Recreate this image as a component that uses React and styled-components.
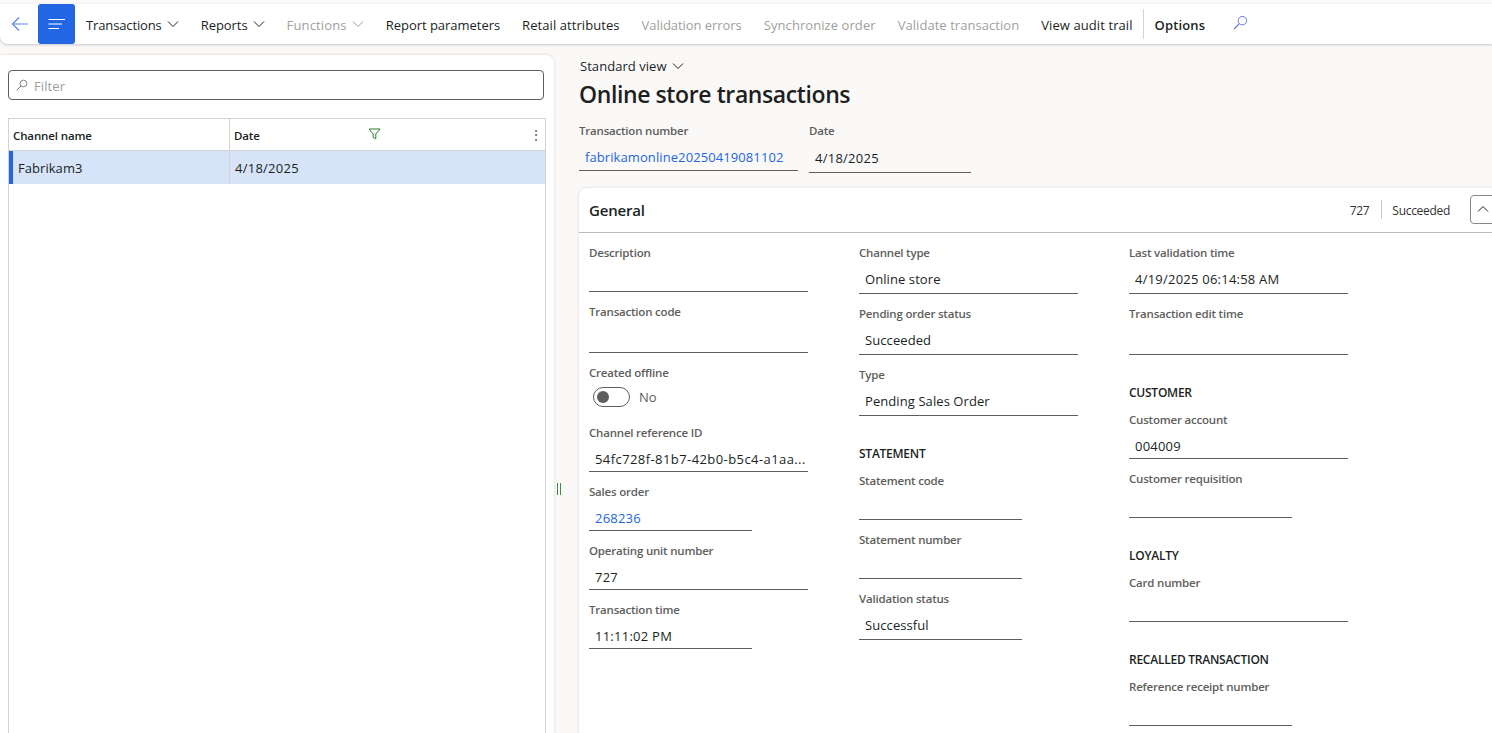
import React from 'react';
import styled, { createGlobalStyle } from 'styled-components';

const FONT = '"Open Sans", "Noto Sans", sans-serif';

const menuItems = [
    { label: 'Transactions', chevron: true, track: -0.13 },
    { label: 'Reports', chevron: true },
    { label: 'Functions', chevron: true, disabled: true, track: 0.15 },
    { label: 'Report parameters', track: -0.03 },
    { label: 'Retail attributes', track: 0.07 },
    { label: 'Validation errors', disabled: true },
    { label: 'Synchronize order', disabled: true, track: 0.07 },
    { label: 'Validate transaction', disabled: true, track: 0.05 },
    { label: 'View audit trail', track: 0.09 },
];

function Chevron({ up }) {
    return (
        <ChevronIcon viewBox="0 0 12 8" $up={up}>
            <path d="M1 1.5 L6 6.5 L11 1.5" fill="none" stroke="currentColor" strokeWidth="1" />
        </ChevronIcon>
    );
}

function SearchGlass({ color, size }) {
    return (
        <svg width={size} height={size} viewBox="0 0 16 16">
            <circle cx="10" cy="6" r="4.5" fill="none" stroke={color} strokeWidth="1" />
            <path d="M6.8 9.2 L1 15" stroke={color} strokeWidth="1.2" />
        </svg>
    );
}

function Field({ label, value, link, short, tall, track }) {
    return (
        <FieldBox $short={short}>
            <Label>{label}</Label>
            <Value $link={link} $tall={tall} $track={track}>{value}</Value>
        </FieldBox>
    );
}

function App() {
    return (
        <Page>
            <GlobalStyle />
            <Toolbar>
                <BackButton>
                    <svg width="18" height="16" viewBox="0 0 18 16">
                        <path d="M17 8 H1.5 M8 1.5 L1.5 8 L8 14.5" fill="none" stroke="#5b83e8" strokeWidth="1.2" />
                    </svg>
                </BackButton>
                <MenuButton>
                    <svg width="18" height="12" viewBox="0 0 18 12">
                        <path d="M0.5 1.5 H17 M0.5 6 H14 M0.5 10.5 H11" stroke="#fff" strokeWidth="1" />
                    </svg>
                </MenuButton>
                {menuItems.map(item => (
                    <MenuItem key={item.label} $disabled={item.disabled} $track={item.track}>
                        {item.label}
                        {item.chevron && <Chevron />}
                    </MenuItem>
                ))}
                <ToolbarDivider />
                <OptionsItem>Options</OptionsItem>
                <SearchButton>
                    <SearchGlass color="#5b6fe0" size={15} />
                </SearchButton>
            </Toolbar>

            <Content>
                <LeftPanel>
                    <FilterBox>
                        <SearchGlass color="#605e5c" size={12} />
                        <FilterText>Filter</FilterText>
                    </FilterBox>
                    <Grid>
                        <GridHeader>
                            <NameHead>Channel name</NameHead>
                            <DateHead>
                                Date
                                <svg width="13" height="12" viewBox="0 0 13 12">
                                    <path d="M1 1 H12 L7.8 6 V10.8 L5.2 9.5 V6 Z" fill="none" stroke="#2e7d32" strokeWidth="1" />
                                </svg>
                            </DateHead>
                            <MoreDots>⋮</MoreDots>
                        </GridHeader>
                        <GridRow>
                            <NameCell>Fabrikam3</NameCell>
                            <DateCell>4/18/2025</DateCell>
                        </GridRow>
                    </Grid>
                </LeftPanel>

                <Splitter>
                    <SplitterGrip />
                </Splitter>

                <Details>
                    <ViewPicker>Standard view <Chevron /></ViewPicker>
                    <Title>Online store transactions</Title>
                    <HeaderFields>
                        <HeaderField $width={219}>
                            <Label>Transaction number</Label>
                            <HeaderValue $link>fabrikamonline20250419081102</HeaderValue>
                        </HeaderField>
                        <HeaderField $width={162}>
                            <Label>Date</Label>
                            <HeaderValue $tall>4/18/2025</HeaderValue>
                        </HeaderField>
                    </HeaderFields>

                    <Card>
                        <CardHeader>
                            <CardTitle>General</CardTitle>
                            <CardSummary>727</CardSummary>
                            <SummaryDivider />
                            <CardSummary>Succeeded</CardSummary>
                            <CollapseButton><Chevron up /></CollapseButton>
                        </CardHeader>
                        <CardBody>
                            <Column>
                                <Field label="Description" value="" />
                                <Field label="Transaction code" value="" tall />
                                <ToggleField>
                                    <Label>Created offline</Label>
                                    <ToggleRow>
                                        <ToggleTrack><ToggleKnob /></ToggleTrack>
                                        <ToggleText>No</ToggleText>
                                    </ToggleRow>
                                </ToggleField>
                                <Field label="Channel reference ID" value="54fc728f-81b7-42b0-b5c4-a1aa..." track={0.42} />
                                <Field label="Sales order" value="268236" link short track={0.2} />
                                <Field label="Operating unit number" value="727" track={0.2} />
                                <Field label="Transaction time" value="11:11:02 PM" short track={0.25} />
                            </Column>
                            <Column>
                                <Field label="Channel type" value="Online store" tall />
                                <Field label="Pending order status" value="Succeeded" tall />
                                <Field label="Type" value="Pending Sales Order" tall />
                                <SectionTitle>STATEMENT</SectionTitle>
                                <Field label="Statement code" value="" short />
                                <Field label="Statement number" value="" short />
                                <Field label="Validation status" value="Successful" short tall />
                            </Column>
                            <Column>
                                <Field label="Last validation time" value="4/19/2025 06:14:58 AM" tall track={0.23} />
                                <Field label="Transaction edit time" value="" tall />
                                <SectionTitle>CUSTOMER</SectionTitle>
                                <Field label="Customer account" value="004009" track={0.2} />
                                <Field label="Customer requisition" value="" short />
                                <SectionTitle>LOYALTY</SectionTitle>
                                <Field label="Card number" value="" />
                                <SectionTitle>RECALLED TRANSACTION</SectionTitle>
                                <Field label="Reference receipt number" value="" short />
                            </Column>
                        </CardBody>
                    </Card>
                </Details>
            </Content>
        </Page>
    );
}

export default App;

const GlobalStyle = createGlobalStyle`
    html, body {
        margin: 0;
        height: 100%;
        overflow: hidden;
        background: #faf9f8;
    }
    body, button {
        font-family: ${FONT};
    }
`;

const Page = styled.div`
    width: 1492px;
    height: 733px;
    overflow: hidden;
    padding-top: 4px;
    box-sizing: border-box;
    background: #faf9f8;
    color: #201f1e;
    font-size: 13px;
`;

const Toolbar = styled.div`
    display: flex;
    align-items: center;
    height: 40px;
    background: #fff;
    border-radius: 0 0 0 8px;
    box-shadow: 0 1px 3px rgba(0, 0, 0, 0.2);
    position: relative;
`;

const BackButton = styled.div`
    width: 38px;
    display: flex;
    justify-content: center;
    align-items: center;
    padding-left: 1px;
    box-sizing: border-box;
`;

const MenuButton = styled.div`
    width: 37px;
    height: 40px;
    background: #2266e3;
    border-radius: 3px;
    display: flex;
    align-items: center;
    justify-content: center;
    margin-right: 11px;
`;

const MenuItem = styled.div`
    display: flex;
    align-items: center;
    gap: 5px;
    margin-right: 22px;
    padding-top: 1px;
    white-space: nowrap;
    letter-spacing: ${props => props.$track ?? -0.05}px;
    color: ${props => (props.$disabled ? '#a19f9d' : '#201f1e')};

    svg {
        margin-top: -2px;
    }
`;

const ChevronIcon = styled.svg`
    width: 12px;
    height: 8px;
    transform: ${props => (props.$up ? 'rotate(180deg)' : 'none')};
`;

const ToolbarDivider = styled.div`
    width: 1px;
    height: 30px;
    background: #d8d6d4;
    margin-left: -12px;
    margin-right: 11px;
`;

const OptionsItem = styled.div`
    font-weight: 600;
    letter-spacing: 0.15px;
    margin-right: 28px;
    padding-top: 1px;
`;

const SearchButton = styled.div`
    display: flex;
    margin-top: -3px;
`;

const Content = styled.div`
    display: flex;
    height: 689px;
    margin-top: 11px;
`;

const LeftPanel = styled.div`
    width: 554px;
    flex: none;
    background: #fff;
    border-radius: 0 8px 0 0;
    box-shadow: 0 0 3px rgba(0, 0, 0, 0.15);
    padding: 15px 8px 0;
    box-sizing: border-box;
`;

const FilterBox = styled.div`
    width: 536px;
    height: 30px;
    border: 1px solid #605e5c;
    border-radius: 4px;
    box-sizing: border-box;
    display: flex;
    align-items: center;
    gap: 6px;
    padding: 0 0 0 7px;
`;

const FilterText = styled.span`
    color: #a19f9d;
    letter-spacing: 0.1px;
    padding-top: 1px;
`;

const Grid = styled.div`
    width: 538px;
    height: 640px;
    margin-top: 18px;
    border: 1px solid #d4d2d0;
    border-bottom: 0;
    box-sizing: border-box;
`;

const GridHeader = styled.div`
    display: flex;
    align-items: center;
    height: 32px;
    box-sizing: border-box;
    border-bottom: 1px solid #d4d2d0;
    font-size: 11.5px;
    font-weight: 600;
    letter-spacing: -0.12px;
`;

const NameHead = styled.div`
    width: 221px;
    height: 100%;
    display: flex;
    align-items: center;
    padding: 2px 0 0 4px;
    box-sizing: border-box;
    border-right: 1px solid #d4d2d0;
`;

const DateHead = styled.div`
    flex: 1;
    height: 100%;
    display: flex;
    align-items: center;
    gap: 108px;
    padding: 2px 0 0 4px;
    box-sizing: border-box;

    svg {
        margin-top: -4px;
    }
`;

const MoreDots = styled.div`
    width: 19px;
    text-align: center;
    font-size: 14px;
    font-weight: 400;
    color: #605e5c;
`;

const GridRow = styled.div`
    display: flex;
    height: 33px;
    background: #d6e3f9;
`;

const NameCell = styled.div`
    width: 221px;
    flex: none;
    display: flex;
    align-items: center;
    padding-left: 5px;
    box-sizing: border-box;
    border-left: 4px solid #2266e3;
    border-right: 1px solid #d4d2d0;
    letter-spacing: 0.05px;
`;

const DateCell = styled.div`
    display: flex;
    align-items: center;
    padding-left: 5px;
    letter-spacing: 0.25px;
`;

const Splitter = styled.div`
    width: 25px;
    flex: none;
    padding: 428px 0 0 3px;
    box-sizing: border-box;
`;

const SplitterGrip = styled.div`
    width: 2px;
    height: 12px;
    border-left: 1px solid #3a8a4a;
    border-right: 1px solid #3a8a4a;
`;

const Details = styled.div`
    flex: 1;
    min-width: 0;
`;

const ViewPicker = styled.div`
    display: flex;
    align-items: center;
    gap: 5px;
    height: 22px;
    padding-left: 1px;
    letter-spacing: 0.05px;
`;

const Title = styled.h1`
    margin: 0;
    height: 36px;
    line-height: 35px;
    font-size: 23px;
    font-weight: 600;
    letter-spacing: -0.4px;
    color: #201f1e;
`;

const HeaderFields = styled.div`
    display: flex;
    align-items: flex-start;
    gap: 11px;
    margin-top: 10px;
`;

const HeaderField = styled.div`
    width: ${props => props.$width}px;
`;

const Label = styled.div`
    height: 16px;
    line-height: 16px;
    font-size: 11.5px;
    font-weight: 600;
    letter-spacing: -0.2px;
    color: #605e5c;
    white-space: nowrap;
`;

const HeaderValue = styled.div`
    height: ${props => (props.$tall ? 34 : 32)}px;
    box-sizing: border-box;
    padding: ${props => (props.$tall ? 10 : 9)}px 0 0 6px;
    line-height: 18px;
    border-bottom: 1px solid #605e5c;
    letter-spacing: ${props => (props.$link ? 0.09 : 0.25)}px;
    color: ${props => (props.$link ? '#2266e3' : '#201f1e')};
`;

const Card = styled.div`
    width: 930px;
    height: 560px;
    margin-top: 15px;
    background: #fff;
    border-radius: 8px 8px 0 0;
    box-shadow: 0 0 3px rgba(0, 0, 0, 0.14);
`;

const CardHeader = styled.div`
    display: flex;
    align-items: center;
    height: 45px;
    box-sizing: border-box;
    padding: 0 0 1px 10px;
    border-bottom: 1px solid #bdbbb9;
`;

const CardTitle = styled.div`
    flex: 1;
    font-size: 15px;
    font-weight: 600;
    letter-spacing: -0.2px;
`;

const CardSummary = styled.div`
    font-size: 12px;
    letter-spacing: -0.3px;
    padding-top: 2px;
    color: #323130;
`;

const SummaryDivider = styled.div`
    width: 1px;
    height: 19px;
    background: #c8c6c4;
    margin: 0 10px 0 12px;
`;

const CollapseButton = styled.div`
    width: 39px;
    height: 29px;
    margin: -1px 0 0 20px;
    border: 1px solid #8a8886;
    border-radius: 4px;
    box-sizing: border-box;
    display: flex;
    align-items: center;
    padding-left: 6px;
`;

const CardBody = styled.div`
    display: flex;
    padding: 12px 0 0 10px;
`;

const Column = styled.div`
    width: 270px;
`;

const FieldBox = styled.div`
    width: ${props => (props.$short ? 163 : 219)}px;
    margin-bottom: 12px;
`;

const Value = styled.div`
    height: ${props => (props.$tall ? 33 : 31)}px;
    box-sizing: border-box;
    padding: 9px 0 0 6px;
    line-height: 18px;
    border-bottom: 1px solid #605e5c;
    letter-spacing: ${props => props.$track ?? 0.08}px;
    white-space: nowrap;
    color: ${props => (props.$link ? '#2266e3' : '#201f1e')};
`;

const ToggleField = styled.div`
    height: 60px;
`;

const ToggleRow = styled.div`
    display: flex;
    align-items: center;
    gap: 9px;
    padding: 6px 0 0 4px;
`;

const ToggleTrack = styled.div`
    width: 37px;
    height: 20px;
    border: 1px solid #605e5c;
    border-radius: 10px;
    box-sizing: border-box;
    display: flex;
    align-items: center;
    padding-left: 3px;
`;

const ToggleKnob = styled.div`
    width: 12px;
    height: 12px;
    border-radius: 50%;
    background: #605e5c;
`;

const ToggleText = styled.span`
    color: #605e5c;
`;

const SectionTitle = styled.div`
    height: 16px;
    line-height: 18px;
    margin: 29px 0 12px;
    font-size: 12px;
    font-weight: 600;
    letter-spacing: -0.25px;
    color: #201f1e;
`;
